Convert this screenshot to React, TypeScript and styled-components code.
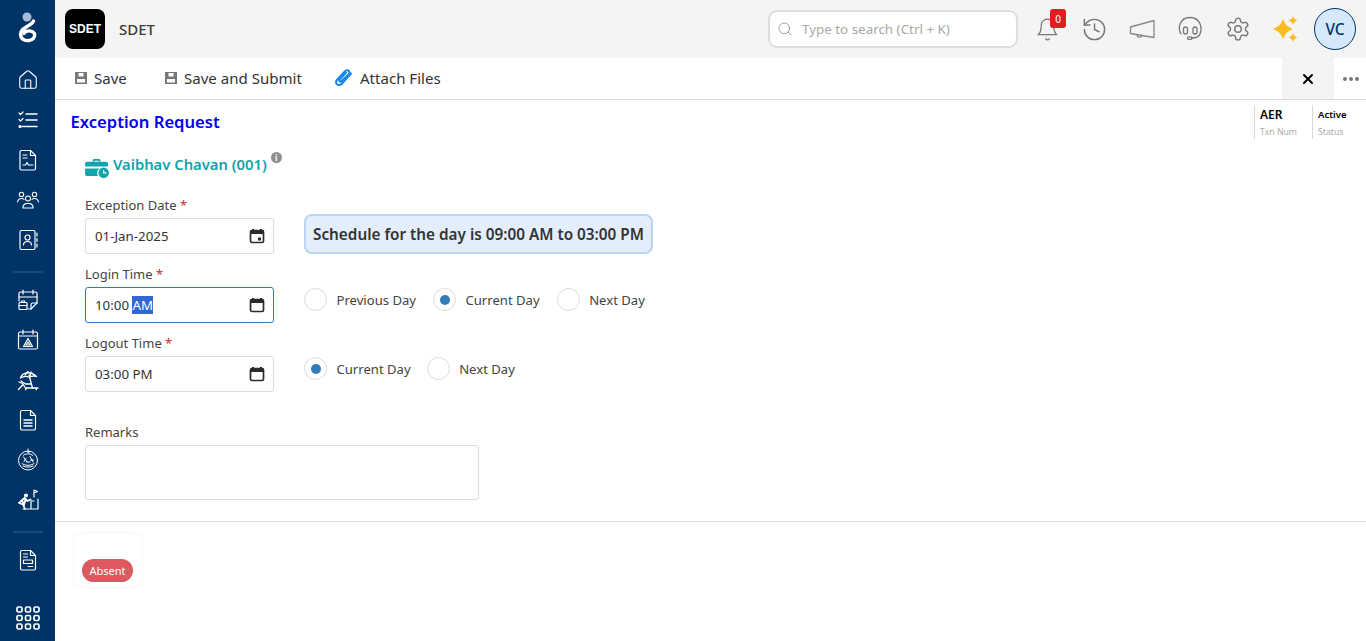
import { ReactNode } from "react";
import styled, { createGlobalStyle } from "styled-components";
import {
  LuBell,
  LuHistory,
  LuHouse,
  LuSearch,
  LuSettings,
  LuX,
} from "react-icons/lu";

const GlobalStyle = createGlobalStyle`
  html, body {
    margin: 0;
    padding: 0;
    background: #fff;
    font-family: "Noto Sans", "Open Sans", sans-serif;
    color: #333;
  }
  * { box-sizing: border-box; }
`;

const Page = styled.div`
  display: flex;
  width: 1366px;
  height: 641px;
  overflow: hidden;
`;

const Sidebar = styled.aside`
  width: 55px;
  flex: none;
  background: #003366;
  display: flex;
  flex-direction: column;
  align-items: center;
  color: #fff;
`;

const LogoSlot = styled.div`
  height: 60px;
  width: 100%;
  display: flex;
  align-items: center;
  justify-content: center;
`;

const NavItem = styled.div`
  height: 40px;
  width: 100%;
  display: flex;
  align-items: center;
  justify-content: center;
`;

const NavRule = styled.div`
  height: 20px;
  width: 30px;
  padding-top: 3px;
  display: flex;
  align-items: center;
  &::before {
    content: "";
    width: 100%;
    height: 2px;
    background: #1c4877;
  }
`;

const AppsSlot = styled.div`
  margin-top: auto;
  height: 46px;
  display: flex;
  align-items: center;
  justify-content: center;
`;

const Main = styled.div`
  flex: 1;
  min-width: 0;
  display: flex;
  flex-direction: column;
`;

const Topbar = styled.header`
  height: 58px;
  flex: none;
  background: #f4f4f4;
  display: flex;
  align-items: center;
  padding: 0 10px;
`;

const Brand = styled.div`
  width: 40px;
  height: 40px;
  border-radius: 8px;
  background: #000;
  color: #fff;
  font-family: "Liberation Sans", sans-serif;
  font-size: 12px;
  font-weight: 700;
  display: flex;
  align-items: center;
  justify-content: center;
`;

const BrandName = styled.div`
  margin-left: 14px;
  font-size: 15px;
  font-weight: 500;
  color: #3a3a3a;
`;

const Search = styled.div`
  margin-left: auto;
  width: 250px;
  height: 38px;
  background: #fff;
  border: 2px solid #dedede;
  border-radius: 9px;
  display: flex;
  align-items: center;
  padding-left: 7px;
  gap: 9px;
  color: #a8a8a8;
  font-size: 13.4px;
`;

const TopIcons = styled.div`
  display: flex;
  align-items: center;
  margin-left: 6px;
`;

const TopIcon = styled.div<{ $width?: number }>`
  position: relative;
  width: ${(p) => p.$width ?? 48}px;
  height: 40px;
  display: flex;
  align-items: center;
  justify-content: center;
  color: #777;
`;

const Count = styled.span`
  position: absolute;
  left: 26px;
  top: 0;
  width: 16px;
  height: 19px;
  border-radius: 3px;
  background: #e02020;
  color: #fff;
  font-size: 10px;
  display: flex;
  align-items: center;
  justify-content: center;
`;

const Avatar = styled.div`
  width: 42px;
  height: 42px;
  margin-left: 4px;
  border-radius: 50%;
  border: 1px solid #003366;
  background: #d6e9fc;
  color: #003366;
  font-size: 15.5px;
  font-weight: 500;
  display: flex;
  align-items: center;
  justify-content: center;
`;

const Toolbar = styled.div`
  height: 42px;
  flex: none;
  border-bottom: 1px solid #dcdcdc;
  display: flex;
  align-items: stretch;
  padding-left: 20px;
`;

const ToolButton = styled.div<{ $gap: number; $width: number }>`
  width: ${(p) => p.$width}px;
  padding-bottom: 2px;
  display: flex;
  align-items: center;
  gap: ${(p) => p.$gap}px;
  font-size: 15.05px;
  color: #333;
`;

const CloseBox = styled.div`
  margin-left: auto;
  width: 52px;
  background: #f4f4f4;
  display: flex;
  align-items: center;
  justify-content: center;
  color: #000;
`;

const MoreBox = styled.div`
  width: 32px;
  padding-left: 2px;
  display: flex;
  align-items: center;
  justify-content: center;
  gap: 2px;
  & > i {
    width: 4px;
    height: 4px;
    border-radius: 50%;
    background: #777;
  }
`;

const Content = styled.div`
  height: 422px;
  flex: none;
  border-bottom: 1px solid #dcdcdc;
  padding: 5px 0 0 16px;
`;

const TitleRow = styled.div`
  display: flex;
  justify-content: space-between;
  align-items: flex-start;
`;

const Title = styled.h1`
  margin: 5px 0 0 -0.5px;
  font-size: 16.6px;
  line-height: 24px;
  font-weight: 600;
  color: #0000ee;
`;

const Meta = styled.div`
  display: flex;
`;

const MetaCell = styled.div<{ $width: number }>`
  width: ${(p) => p.$width}px;
  height: 34px;
  border-left: 1px solid #d8d8d8;
  padding-left: 5px;
  display: flex;
  flex-direction: column;
`;

const MetaValue = styled.span<{ $size: number }>`
  font-size: ${(p) => p.$size}px;
  line-height: 20px;
  font-weight: 600;
  color: #000;
`;

const MetaLabel = styled.span`
  font-size: 8.7px;
  line-height: 14px;
  color: #aaa;
`;

const Employee = styled.div`
  margin: 10px 0 0 14px;
  display: flex;
  align-items: center;
  height: 30px;
  & > svg {
    margin-top: 7px;
  }
`;

const EmployeeName = styled.span`
  margin-left: 4px;
  font-size: 14.8px;
  font-weight: 600;
  color: #12a3ab;
`;

const InfoDot = styled.span`
  align-self: flex-start;
  margin: 3px 0 0 4px;
  width: 11px;
  height: 11px;
  border-radius: 50%;
  background: #8f8f8f;
  color: #fff;
  font-size: 8px;
  font-weight: 700;
  line-height: 11px;
  text-align: center;
`;

const Form = styled.div`
  margin: 16px 0 0 14px;
  display: grid;
  grid-template-columns: 189px 1fr;
  column-gap: 30px;
`;

const Field = styled.div`
  height: 69px;
  display: flex;
  flex-direction: column;
`;

const Label = styled.label`
  display: block;
  height: 23px;
  font-size: 13px;
  line-height: 20px;
  color: #444;
  & > em {
    font-style: normal;
    color: #c9302c;
  }
`;

const Input = styled.div<{ $focused?: boolean }>`
  width: 189px;
  height: 36px;
  border: 1px solid ${(p) => (p.$focused ? "#337ab7" : "#dcdcdc")};
  border-radius: 3px;
  padding: 0 8px 0 9px;
  display: flex;
  align-items: center;
  justify-content: space-between;
  font-size: 13.3px;
  color: #333;
  background: #fff;
`;

const Selected = styled.span`
  background: #3367d1;
  color: #fff;
`;

const SideCell = styled.div`
  height: 69px;
  display: flex;
  align-items: center;
  padding-top: 2px;
`;

const Schedule = styled.div`
  margin-top: 7px;
  height: 40px;
  width: 349px;
  padding: 0 7px;
  background: #e4eefa;
  border: 2px solid #b9d5f2;
  border-radius: 8px;
  font-size: 15.3px;
  font-weight: 600;
  color: #333;
  white-space: nowrap;
  display: flex;
  align-items: center;
`;

const RadioOption = styled.div<{ $spacing: number }>`
  display: flex;
  align-items: center;
  margin-right: ${(p) => p.$spacing}px;
  font-size: 13.1px;
  color: #444;
`;

const RadioCircle = styled.span<{ $checked?: boolean }>`
  width: 23px;
  height: 23px;
  margin-right: 9.5px;
  border-radius: 50%;
  border: 1px solid #dcdcdc;
  display: flex;
  align-items: center;
  justify-content: center;
  &::after {
    content: "";
    width: 10px;
    height: 10px;
    border-radius: 50%;
    background: ${(p) => (p.$checked ? "#337ab7" : "transparent")};
  }
`;

const Remarks = styled.div`
  margin: 20px 0 0 14px;
`;

const TextArea = styled.div`
  width: 394px;
  height: 55px;
  border: 1px solid #dcdcdc;
  border-radius: 3px;
`;

const Footer = styled.div`
  padding: 10px 0 0 18px;
`;

const StatusCard = styled.div`
  width: 70px;
  height: 56px;
  border: 1px solid #f6f6f6;
  border-radius: 8px;
  padding: 26px 0 0 8px;
`;

const StatusBadge = styled.span`
  display: flex;
  align-items: center;
  justify-content: center;
  width: 51px;
  height: 23px;
  border-radius: 12px;
  background: #dc5a5f;
  color: #fff;
  font-size: 11px;
`;

const Line = ({ size = 24, width = 1.2, children }: { size?: number; width?: number; children: ReactNode }) => (
  <svg
    width={size}
    height={size}
    viewBox="0 0 24 24"
    fill="none"
    stroke="currentColor"
    strokeWidth={width}
    strokeLinecap="round"
    strokeLinejoin="round"
  >
    {children}
  </svg>
);

const BrandMark = () => (
  <svg width="20" height="33" viewBox="18 11 20 33" style={{ marginBottom: 5 }}>
    <circle cx="27" cy="17" r="4.5" fill="#a5bcd8" />
    <path
      d="M33.500 21C31 26.500 20.500 27 20.500 34.500 21 40 26 41 29 40.500 33 40 35.500 37 34.500 33.500 31.500 30 26 30 24 33.500"
      fill="none"
      stroke="#fff"
      strokeWidth="3.4"
      strokeLinecap="round"
    />
  </svg>
);

const ChecklistIcon = () => (
  <Line>
    <path d="M3 5l1.500 1.500L7 4M3 11.500L4.500 13 7 10.500" />
    <path d="M10 6h11M10 12h11M6 18.500h15" strokeWidth={1.5} />
    <circle cx="4" cy="18.500" r="1" fill="currentColor" />
  </Line>
);

const DocChartIcon = () => (
  <Line>
    <path d="M5.500 2.500h9l5 5v13a1.500 1.500 0 0 1-1.500 1.500H5.500A1.500 1.500 0 0 1 4 20.500v-16.500a1.500 1.500 0 0 1 1.500-1.500z" />
    <path d="M14.500 2.500v5h5M7 7h4M7 10h4M7 17h2.500l1.500-2.500 1.500 2.500H17" />
  </Line>
);

const PeopleIcon = () => (
  <Line width={1.1}>
    <circle cx="12" cy="10.500" r="2.500" />
    <circle cx="5.500" cy="6.500" r="2.200" />
    <circle cx="18.500" cy="6.500" r="2.200" />
    <path d="M7 20v-1.500a4 4 0 0 1 4-3h2a4 4 0 0 1 4 3V20zM1.500 14c.5-2.500 2-3.500 4-3.500 1 0 1.800.2 2.500.8M22.500 14c-.5-2.500-2-3.500-4-3.500-1 0-1.800.2-2.500.8" />
  </Line>
);

const ContactBookIcon = () => (
  <Line>
    <rect x="4" y="2.500" width="15" height="19" rx="1.500" />
    <circle cx="11.500" cy="9.500" r="2.500" />
    <path d="M7.500 17c0-2.500 1.500-3.500 4-3.500s4 1 4 3.500M21 5v3M21 10.500v3M21 16v3" />
  </Line>
);

const CalendarCaseIcon = () => (
  <Line>
    <path d="M3 13V5.500A1.500 1.500 0 0 1 4.500 4h15A1.500 1.500 0 0 1 21 5.500V15l-6 6h-3" />
    <path d="M7 2v4M17 2v4M3 9h18M21 15h-4a2 2 0 0 0-2 2v4" />
    <rect x="3" y="14.500" width="8" height="7" rx="1" />
    <path d="M5.500 14.500V13h3v1.500M3 17.500h8" />
  </Line>
);

const CalendarAlertIcon = () => (
  <Line>
    <rect x="2.500" y="4" width="19" height="17" rx="1.500" />
    <path d="M7 2v4M17 2v4M2.500 8h19M12 10.500l4.500 8h-9zM12 14l2 3h-4z" />
  </Line>
);

const BeachIcon = () => (
  <Line width={1.3}>
    <path d="M4.500 10C6 5 14 2 20.500 8.500 17 7.500 15 8 13.500 9.500 11 8 7.500 8 4.500 10z" />
    <path d="M9 7l3-3.500M14 8l1-4M13 7l3.500 13" />
    <path d="M3 14l3.500 1.500 3 4.500H22M2.500 21.500 7 16.500M5 13l4.500 3H15M11 20l-1.500 1.500M19 20l1.500 1.500" />
  </Line>
);

const DocLinesIcon = () => (
  <Line>
    <path d="M6 2.500h8.500l5 5v13a1.500 1.500 0 0 1-1.500 1.500H6a1.500 1.500 0 0 1-1.500-1.500V4A1.500 1.500 0 0 1 6 2.500z" />
    <path d="M14.500 2.500v5h5" />
    <path d="M8 12h8M8 15h8M8 18h8" strokeWidth={1.5} />
  </Line>
);

const GlobeIcon = () => (
  <Line width={1}>
    <circle cx="12" cy="12.500" r="9.500" />
    <path d="M12 1v4l2-1.500M7 7.500c2-2 7-2.500 10 0" />
    <path d="M6 15.500c3 2.500 9 2.500 12 0M7 18c3 1.500 7 1.500 10 0M7.500 9l3.500 5M10 10.500l-2 3M14 8.500l3 5.500M14.500 12h3M11 14h3" />
  </Line>
);

const ClimbIcon = () => (
  <Line width={1.2}>
    <path d="M18 9V2l3.500 1.500L18 5M22 11v10H7M15 21v-8h3" />
    <circle cx="10" cy="7.500" r="1.400" fill="currentColor" />
    <path d="M8.500 10 3 15l4 1.500 2 4.500M8.500 10l3 3 3-1.500M9.500 11.500 8 17M6 12.500l1.500 3" strokeWidth={1.8} />
  </Line>
);

const FormDocIcon = () => (
  <Line>
    <path d="M6 2.500h8.500l5 5v13a1.500 1.500 0 0 1-1.500 1.500H6a1.500 1.500 0 0 1-1.500-1.500V4A1.500 1.500 0 0 1 6 2.500z" />
    <path d="M14.500 2.500v5h5M7.500 6h4M7.500 9h4" />
    <rect x="7.500" y="12" width="9" height="3.500" />
    <path d="M12 18.500h4.500" />
  </Line>
);

const AppsIcon = () => (
  <svg width="24" height="24" viewBox="0 0 24 24" fill="none" stroke="#fff" strokeWidth="1.700">
    {[3.500, 12, 20.500].map((y) =>
      [3.500, 12, 20.500].map((x) => <rect key={`${x}-${y}`} x={x - 2.500} y={y - 2.500} width="5" height="5" rx="1.500" />),
    )}
  </svg>
);

const MegaphoneIcon = () => (
  <svg width="26" height="20" viewBox="0 0 26 20" fill="none" stroke="#888" strokeWidth="1.300" strokeLinejoin="round">
    <path d="M1.500 8v6.500L25 18.500V1.500z" />
    <path d="M8 15.500c-.5 3 4.500 3.500 5 .8" />
  </svg>
);

const HeadsetIcon = () => (
  <svg width="26" height="26" viewBox="0 0 26 26" fill="none" stroke="#777" strokeWidth="1.300" strokeLinecap="round">
    <path d="M4 18C.5 12 2.500 1.500 13 1.500S25.500 12 23 18c-1 3-4 4-8.500 4" />
    <rect x="6.500" y="11" width="4" height="7" rx="2" />
    <rect x="16" y="11" width="4" height="7" rx="2" />
    <rect x="10.500" y="20.800" width="4.500" height="2.500" rx="1.200" />
  </svg>
);

const SparkleIcon = () => (
  <svg width="28" height="28" viewBox="0 0 28 28" fill="#fbbd23">
    <path d="M11 3.500c1.500 5.500 4 8 10 10.500-6 2.500-8.500 5-10 10.500-1.500-5.500-4-8-10-10.500 6-2.500 8.500-5 10-10.500z" />
    <path d="M21 1c.8 2.500 1.800 3.600 4.500 4.500-2.700.9-3.700 2-4.500 4.500-.8-2.500-1.800-3.600-4.500-4.500 2.700-.9 3.700-2 4.500-4.500zM21 18c.8 2.500 1.800 3.600 4.500 4.500-2.700.9-3.700 2-4.500 4.500-.8-2.500-1.800-3.600-4.500-4.500 2.700-.9 3.700-2 4.500-4.500z" />
  </svg>
);

const FloppyIcon = () => (
  <svg width="12" height="12" viewBox="0 0 12 12">
    <rect width="12" height="12" fill="#777" />
    <rect x="3.500" y="1" width="5" height="3.500" fill="#fff" />
    <rect x="2" y="7" width="8" height="3.500" fill="#fff" />
  </svg>
);

const ClipIcon = () => (
  <svg width="20" height="20" viewBox="0 0 20 20" fill="none" stroke="#1a87f0" strokeWidth="2" strokeLinecap="round">
    <path d="M17 5.500 8 15.500c-1.500 1.700-3.700 2-5 .7-1.300-1.300-1-3.400.5-5l7.500-8c1-1.100 2.700-1.400 3.700-.4 1 1 .8 2.500-.2 3.600L7.500 13c-.6.600-1.400.8-1.900.3-.5-.5-.4-1.300.2-1.900l6.200-6.600" />
  </svg>
);

const BriefcaseClockIcon = () => (
  <svg width="24" height="20" viewBox="0 0 25 21">
    <path d="M8 4V2.500A1.500 1.500 0 0 1 9.500 1h5A1.500 1.500 0 0 1 16 2.500V4h-1.800V2.800H9.800V4z" fill="#12a3ab" />
    <path d="M2 4h20a2 2 0 0 1 2 2v3H0V6a2 2 0 0 1 2-2z" fill="#12a3ab" />
    <path d="M0 11h15a6 6 0 0 0-1.500 8H2a2 2 0 0 1-2-2z" fill="#12a3ab" />
    <circle cx="19.500" cy="15.500" r="5.500" fill="#12a3ab" />
    <path d="M19.500 12.500v3.200h3" fill="none" stroke="#fff" strokeWidth="1.300" />
  </svg>
);

const CalendarGlyph = ({ day }: { day?: boolean }) => (
  <svg width="16" height="16" viewBox="0 0 16 16" fill="none">
    <path d="M4 1v2M12 1v2" stroke="#2b2b2b" strokeWidth="2" />
    <rect x="1.500" y="2.500" width="13" height="12" rx="1.500" stroke="#2b2b2b" strokeWidth="1.700" />
    <rect x="1.500" y="3" width="13" height="3" fill="#2b2b2b" />
    {day && <rect x="9" y="9.500" width="3" height="3" fill="#2b2b2b" />}
  </svg>
);

const Radio = ({ label, checked, spacing = 0 }: { label: string; checked?: boolean; spacing?: number }) => (
  <RadioOption $spacing={spacing}>
    <RadioCircle $checked={checked} />
    {label}
  </RadioOption>
);

const App = () => {
  return (
    <Page>
      <GlobalStyle />
      <Sidebar>
        <LogoSlot>
          <BrandMark />
        </LogoSlot>
        <NavItem><LuHouse size={22} strokeWidth={1.2} /></NavItem>
        <NavItem><ChecklistIcon /></NavItem>
        <NavItem><DocChartIcon /></NavItem>
        <NavItem><PeopleIcon /></NavItem>
        <NavItem><ContactBookIcon /></NavItem>
        <NavRule />
        <NavItem><CalendarCaseIcon /></NavItem>
        <NavItem><CalendarAlertIcon /></NavItem>
        <NavItem><BeachIcon /></NavItem>
        <NavItem><DocLinesIcon /></NavItem>
        <NavItem><GlobeIcon /></NavItem>
        <NavItem><ClimbIcon /></NavItem>
        <NavRule />
        <NavItem><FormDocIcon /></NavItem>
        <AppsSlot><AppsIcon /></AppsSlot>
      </Sidebar>

      <Main>
        <Topbar>
          <Brand>SDET</Brand>
          <BrandName>SDET</BrandName>
          <Search>
            <LuSearch size={16} strokeWidth={1.2} color="#888" />
            Type to search (Ctrl + K)
          </Search>
          <TopIcons>
            <TopIcon $width={46}>
              <LuBell size={25} strokeWidth={1.2} />
              <Count>0</Count>
            </TopIcon>
            <TopIcon><LuHistory size={27} strokeWidth={1.3} /></TopIcon>
            <TopIcon><MegaphoneIcon /></TopIcon>
            <TopIcon><HeadsetIcon /></TopIcon>
            <TopIcon><LuSettings size={26} strokeWidth={1.3} /></TopIcon>
            <TopIcon><SparkleIcon /></TopIcon>
          </TopIcons>
          <Avatar>VC</Avatar>
        </Topbar>

        <Toolbar>
          <ToolButton $gap={7} $width={90}><FloppyIcon />Save</ToolButton>
          <ToolButton $gap={7} $width={169}><FloppyIcon />Save and Submit</ToolButton>
          <ToolButton $gap={6} $width={120}><ClipIcon />Attach Files</ToolButton>
          <CloseBox><LuX size={16} strokeWidth={3} /></CloseBox>
          <MoreBox><i /><i /><i /></MoreBox>
        </Toolbar>

        <Content>
          <TitleRow>
            <Title>Exception Request</Title>
            <Meta>
              <MetaCell $width={58}>
                <MetaValue $size={12}>AER</MetaValue>
                <MetaLabel>Txn Num</MetaLabel>
              </MetaCell>
              <MetaCell $width={54}>
                <MetaValue $size={9.5}>Active</MetaValue>
                <MetaLabel>Status</MetaLabel>
              </MetaCell>
            </Meta>
          </TitleRow>

          <Employee>
            <BriefcaseClockIcon />
            <EmployeeName>Vaibhav Chavan (001)</EmployeeName>
            <InfoDot>i</InfoDot>
          </Employee>

          <Form>
            <Field>
              <Label>Exception Date <em>*</em></Label>
              <Input>01-Jan-2025<CalendarGlyph day /></Input>
            </Field>
            <SideCell>
              <Schedule>Schedule for the day is 09:00 AM to 03:00 PM</Schedule>
            </SideCell>

            <Field>
              <Label>Login Time <em>*</em></Label>
              <Input $focused>
                <span>10:00 <Selected>AM</Selected></span>
                <CalendarGlyph />
              </Input>
            </Field>
            <SideCell>
              <Radio label="Previous Day" spacing={17} />
              <Radio label="Current Day" checked spacing={17} />
              <Radio label="Next Day" />
            </SideCell>

            <Field>
              <Label>Logout Time <em>*</em></Label>
              <Input>03:00 PM<CalendarGlyph /></Input>
            </Field>
            <SideCell>
              <Radio label="Current Day" checked spacing={16} />
              <Radio label="Next Day" />
            </SideCell>
          </Form>

          <Remarks>
            <Label>Remarks</Label>
            <TextArea />
          </Remarks>
        </Content>

        <Footer>
          <StatusCard>
            <StatusBadge>Absent</StatusBadge>
          </StatusCard>
        </Footer>
      </Main>
    </Page>
  );
};

export default App;
